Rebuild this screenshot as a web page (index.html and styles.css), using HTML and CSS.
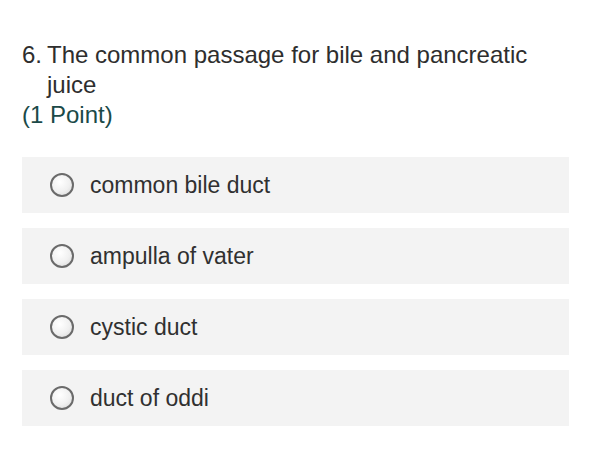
FILE: index.html
```html
<!DOCTYPE html>
<html>
<head>
<meta charset="utf-8">
<link rel="stylesheet" href="styles.css">
</head>
<body>
<div class="question">
  <div class="title">
    <span class="num">6.</span><span class="qtext">The common passage for bile and pancreatic juice</span>
  </div>
  <div class="points">(1 Point)</div>
  <div class="options">
    <div class="option"><span class="radio"></span><span class="label">common bile duct</span></div>
    <div class="option"><span class="radio"></span><span class="label">ampulla of vater</span></div>
    <div class="option"><span class="radio"></span><span class="label">cystic duct</span></div>
    <div class="option"><span class="radio"></span><span class="label">duct of oddi</span></div>
  </div>
</div>
</body>
</html>
```
FILE: styles.css
```css
html, body {
  margin: 0;
  padding: 0;
  background: #ffffff;
}
body {
  font-family: "Liberation Sans", Arial, sans-serif;
  color: #333333;
}
.question {
  padding: 40px 22px 0 22px;
  width: 547px;
}
.title {
  display: flex;
  font-size: 24px;
  line-height: 30px;
  color: #2e2e2e;
}
.num {
  flex: none;
  width: 25px;
}
.qtext {
  width: 510px;
}
.points {
  font-size: 24px;
  line-height: 30px;
  color: #1b4a48;
}
.options {
  margin-top: 27px;
  display: flex;
  flex-direction: column;
  gap: 15px;
}
.option {
  height: 56px;
  background: #f3f3f3;
  display: flex;
  align-items: center;
  padding-left: 28px;
  gap: 16px;
}
.radio {
  width: 20px;
  height: 20px;
  border: 2px solid #6a6a6a;
  border-radius: 50%;
  background: radial-gradient(circle at 40% 35%, #ffffff 0%, #f0f0f0 55%, #d4d4d4 100%);
  flex: none;
}
.label {
  font-size: 23px;
  line-height: 28px;
  color: #303030;
}
```
